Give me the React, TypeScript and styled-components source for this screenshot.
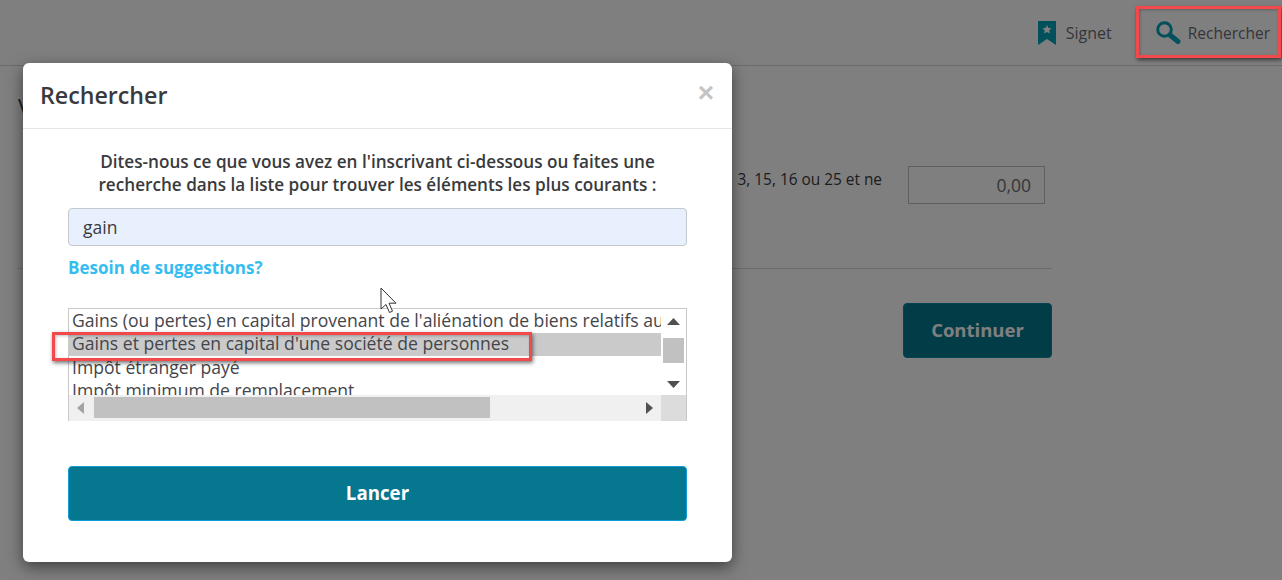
import React from "react";
import styled, { createGlobalStyle } from "styled-components";

const Global = createGlobalStyle`
  html, body { margin: 0; padding: 0; background: #fff; }
  body { font-family: "Open Sans", "Liberation Sans", sans-serif; color: #393a3d; overflow: hidden; }
  * { box-sizing: border-box; }
`;

const Page = styled.div`
  position: relative;
  width: 1282px;
  height: 580px;
  overflow: hidden;
  background: #fff;
`;

const Header = styled.header`
  height: 66px;
  border-bottom: 1px solid #d4d7dc;
  display: flex;
  justify-content: flex-end;
  align-items: center;
  padding: 0 12px 0 0;
  gap: 44px;
`;

const HeaderItem = styled.div<{ $gap: number; $size: number }>`
  display: flex;
  align-items: center;
  gap: ${(p) => p.$gap}px;
  font-size: ${(p) => p.$size}px;
  color: #6b6c72;
`;

const Main = styled.main`
  width: 1052px;
  padding: 27px 0 0 18px;
`;

const PageTitle = styled.h1`
  margin: 0;
  font-size: 22px;
  line-height: 26px;
  font-weight: 400;
  color: #393a3d;
`;

const QuestionRow = styled.div`
  display: flex;
  justify-content: flex-end;
  gap: 26px;
  margin-top: 47px;
  margin-right: 7px;
`;

const Question = styled.p`
  margin: 4px 0 0;
  font-size: 15.4px;
  line-height: 20px;
  color: #393a3d;
`;

const Amount = styled.div`
  width: 137px;
  height: 38px;
  border: 1px solid #babec5;
  display: flex;
  align-items: center;
  justify-content: flex-end;
  padding-right: 13px;
  font-size: 17.5px;
  color: #6b6c72;
`;

const Divider = styled.hr`
  margin: 64px 0 0;
  border: 0;
  border-top: 1px solid #d4d7dc;
`;

const ActionRow = styled.div`
  display: flex;
  justify-content: flex-end;
  margin-top: 34px;
`;

const ContinueButton = styled.div`
  width: 149px;
  height: 55px;
  border-radius: 4px;
  background: #05788f;
  border: 1px solid #0a8aa3;
  color: #fff;
  font-size: 18.5px;
  font-weight: 700;
  display: flex;
  align-items: center;
  justify-content: center;
  padding-bottom: 2px;
`;

const Backdrop = styled.div`
  position: absolute;
  inset: 0;
  background: rgba(0, 0, 0, 0.5);
`;

const Modal = styled.section`
  position: absolute;
  left: 23px;
  top: 63px;
  width: 709px;
  height: 499px;
  background: #fff;
  border-radius: 6px;
  box-shadow: 0 5px 15px rgba(0, 0, 0, 0.5);
`;

const ModalHeader = styled.div`
  height: 66px;
  border-bottom: 1px solid #e3e5e8;
  display: flex;
  align-items: center;
  justify-content: space-between;
  padding: 0 18px 0 17px;
`;

const ModalTitle = styled.h2`
  margin: 0;
  font-size: 23.2px;
  line-height: 30px;
  font-weight: 600;
  color: #393a3d;
  position: relative;
  top: -1px;
`;

const Close = styled.span`
  font-family: "Liberation Sans", sans-serif;
  font-size: 28px;
  font-weight: 700;
  line-height: 27px;
  color: #c4c4c4;
  position: relative;
  top: -3px;
`;

const ModalBody = styled.div`
  padding: 22px 45px 0;
`;

const Intro = styled.p`
  margin: 0;
  font-size: 17.15px;
  line-height: 22.5px;
  font-weight: 600;
  text-align: center;
  white-space: nowrap;
  color: #393a3d;
`;

const SearchInput = styled.div`
  margin-top: 12px;
  height: 38px;
  border: 1px solid #c4c8ce;
  border-radius: 4px;
  background: #e8f0fe;
  padding: 0 14px;
  display: flex;
  align-items: center;
  font-size: 17.5px;
  color: #393a3d;
`;

const Suggest = styled.div`
  margin-top: 11px;
  font-size: 17px;
  line-height: 22px;
  font-weight: 700;
  color: #36bdf0;
`;

const ListBox = styled.div`
  margin-top: 29px;
  height: 113px;
  border: 1px solid #c9c9c9;
  display: grid;
  grid-template-columns: 592px 25px;
  grid-template-rows: 86px 26px;
`;

const Options = styled.div`
  overflow: hidden;
`;

const Option = styled.div<{ $selected?: boolean }>`
  height: 23px;
  padding-left: 3px;
  margin-top: ${(p) => (p.$selected ? 1 : 0)}px;
  font-size: 17.6px;
  line-height: ${(p) => (p.$selected ? 21 : 22)}px;
  white-space: nowrap;
  color: #44454a;
  background: ${(p) => (p.$selected ? "#cacaca" : "transparent")};
`;

const VBar = styled.div`
  position: relative;
  display: flex;
  flex-direction: column;
  align-items: center;
  justify-content: space-between;
  padding: 9px 0 7px;
`;

const VThumb = styled.div`
  position: absolute;
  top: 29px;
  left: 2px;
  width: 21px;
  height: 25px;
  background: #c1c1c1;
`;

const HBar = styled.div`
  position: relative;
  background: #f0f0f0;
  display: flex;
  align-items: center;
  justify-content: space-between;
  padding: 0 8px;
`;

const HThumb = styled.div`
  position: absolute;
  left: 25px;
  top: 2px;
  width: 396px;
  height: 21px;
  background: #c1c1c1;
`;

const Corner = styled.div`
  background: #dcdcdc;
`;

const Arrow = styled.svg`
  display: block;
`;

const Launch = styled.div`
  margin-top: 45px;
  height: 55px;
  border-radius: 4px;
  background: #05788f;
  border: 1px solid #0f9bd8;
  color: #fff;
  font-size: 18.7px;
  font-weight: 700;
  display: flex;
  align-items: center;
  justify-content: center;
  padding-bottom: 2px;
`;

const Callout = styled.div<{ $l: number; $t: number; $w: number; $h: number }>`
  position: absolute;
  left: ${(p) => p.$l}px;
  top: ${(p) => p.$t}px;
  width: ${(p) => p.$w}px;
  height: ${(p) => p.$h}px;
  border: 3px solid #f2494c;
  box-shadow: 1px 2px 4px rgba(0, 0, 0, 0.55), inset 1px 1px 3px rgba(0, 0, 0, 0.25);
`;

const Pointer = styled.svg`
  position: absolute;
  left: 380px;
  top: 287px;
`;

const Bookmark = () => (
  <svg width="18" height="24" viewBox="0 0 18 24">
    <path d="M0 0h18v24l-9-6-9 6z" fill="#05a0b8" />
    <path d="M9 4l1.4 3 3.2.3-2.4 2.1.7 3.2L9 11l-2.9 1.6.7-3.2-2.4-2.1 3.2-.3z" fill="#fff" />
  </svg>
);

const Magnifier = () => (
  <svg width="26" height="24" viewBox="0 0 26 24">
    <circle cx="8.5" cy="8.5" r="6.8" fill="none" stroke="#05a0b8" strokeWidth="3" />
    <path d="M14 14l8 6.5" stroke="#05a0b8" strokeWidth="5" strokeLinecap="round" />
  </svg>
);

export default function App() {
  return (
    <Page>
      <Global />
      <Header>
        <HeaderItem $gap={10} $size={16}>
          <Bookmark />
          Signet
        </HeaderItem>
        <HeaderItem $gap={6} $size={15.5}>
          <Magnifier />
          Rechercher
        </HeaderItem>
      </Header>
      <Main>
        <PageTitle>Vos revenus</PageTitle>
        <QuestionRow>
          <Question>3, 15, 16 ou 25 et ne</Question>
          <Amount>0,00</Amount>
        </QuestionRow>
        <Divider />
        <ActionRow>
          <ContinueButton>Continuer</ContinueButton>
        </ActionRow>
      </Main>
      <Backdrop />
      <Callout $l={1136} $t={6} $w={145} $h={52} />
      <Modal>
        <ModalHeader>
          <ModalTitle>Rechercher</ModalTitle>
          <Close>×</Close>
        </ModalHeader>
        <ModalBody>
          <Intro>
            Dites-nous ce que vous avez en l'inscrivant ci-dessous ou faites une
            <br />
            recherche dans la liste pour trouver les éléments les plus courants :
          </Intro>
          <SearchInput>gain</SearchInput>
          <Suggest>Besoin de suggestions?</Suggest>
          <ListBox>
            <Options>
              <Option>Gains (ou pertes) en capital provenant de l'aliénation de biens relatifs aux</Option>
              <Option $selected>Gains et pertes en capital d'une société de personnes</Option>
              <Option>Impôt étranger payé</Option>
              <Option>Impôt minimum de remplacement</Option>
            </Options>
            <VBar>
              <Arrow width="13" height="7" viewBox="0 0 13 7">
                <path d="M6.5 0L13 7H0z" fill="#505050" />
              </Arrow>
              <VThumb />
              <Arrow width="13" height="7" viewBox="0 0 13 7">
                <path d="M6.5 7L0 0h13z" fill="#505050" />
              </Arrow>
            </VBar>
            <HBar>
              <Arrow width="7" height="12" viewBox="0 0 7 12">
                <path d="M0 6l7-6v12z" fill="#a3a3a3" />
              </Arrow>
              <HThumb />
              <Arrow width="7" height="12" viewBox="0 0 7 12">
                <path d="M7 6L0 0v12z" fill="#505050" />
              </Arrow>
            </HBar>
            <Corner />
          </ListBox>
          <Launch>Lancer</Launch>
        </ModalBody>
      </Modal>
      <Callout $l={52} $t={332} $w={480} $h={29} />
      <Pointer width="20" height="30" viewBox="0 0 20 30">
        <path d="M1 1v21l5-4.5 3.5 8 3-1.3-3.5-8h7z" fill="#fff" stroke="#333" strokeWidth="1" />
      </Pointer>
    </Page>
  );
}
